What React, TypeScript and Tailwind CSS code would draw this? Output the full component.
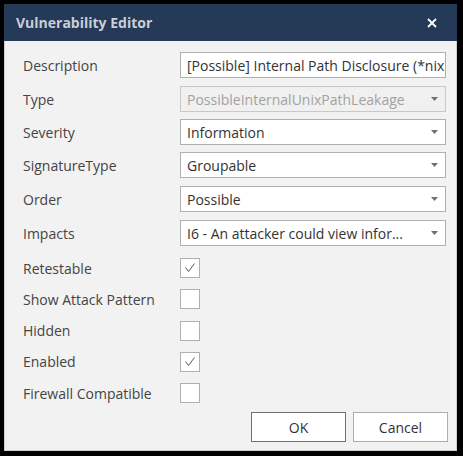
import React from "react";

const font = { fontFamily: '"Open Sans", "Noto Sans", sans-serif' };

const Arrow = () => (
  <svg width="7" height="4" viewBox="0 0 7 4" className="shrink-0">
    <path d="M0 0H7L3.5 4Z" fill="#707070" />
  </svg>
);

const Check = () => (
  <svg width="18" height="18" viewBox="0 0 18 18">
    <path d="M4.5 8.5L7.5 12.5L13.5 4.5" stroke="#555" strokeWidth="1" fill="none" />
  </svg>
);

const Select = ({ value, disabled }: { value: string; disabled?: boolean }) => (
  <div
    className={`flex h-[26px] w-[266px] items-center justify-between border pl-[6px] pr-[7px] ${
      disabled ? "border-[#c8c8c8] bg-[#f0f0f0] text-[#a2a2a2]" : "border-[#b0b0b0] bg-white text-[#333]"
    }`}
  >
    <span className="truncate">{value}</span>
    <Arrow />
  </div>
);

const rows: { label: string; value: string; disabled?: boolean; gap: string }[] = [
  { label: "Type", value: "PossibleInternalUnixPathLeakage", disabled: true, gap: "mt-[8px]" },
  { label: "Severity", value: "Information", gap: "mt-[7px]" },
  { label: "SignatureType", value: "Groupable", gap: "mt-[7px]" },
  { label: "Order", value: "Possible", gap: "mt-[8px]" },
  { label: "Impacts", value: "I6 - An attacker could view infor...", gap: "mt-[8px]" },
];

const checks = [
  { label: "Retestable", checked: true },
  { label: "Show Attack Pattern", checked: false },
  { label: "Hidden", checked: false },
  { label: "Enabled", checked: true },
  { label: "Firewall Compatible", checked: false },
];

export default function App() {
  return (
    <div className="h-[456px] w-[463px] bg-black pb-[5px] pl-[4px] pr-[6px] pt-[4px]" style={font}>
      <div className="flex h-full flex-col">
        <div className="flex h-[37px] shrink-0 items-center justify-between bg-[#243a57] pl-[12px] pr-[20px]">
          <span className="text-[14px] font-bold text-[#c9cfd8]">Vulnerability Editor</span>
          <svg width="10" height="10" viewBox="0 0 10 10">
            <path d="M1 1L9 9M9 1L1 9" stroke="white" strokeWidth="1.8" />
          </svg>
        </div>
        <div className="flex flex-1 flex-col border border-t-0 border-[#d0d0d0] bg-[#f2f2f2] pl-[18px] pr-[10px] pt-[11px] text-[14px] text-[#444]">
          <div className="flex items-center">
            <span className="w-[157px]">Description</span>
            <div className="flex h-[26px] w-[266px] items-center overflow-hidden whitespace-nowrap border border-[#b0b0b0] bg-white pl-[6px] text-[#333]">
              [Possible] Internal Path Disclosure (*nix)
            </div>
          </div>
          {rows.map((r) => (
            <div key={r.label} className={`flex items-center ${r.gap}`}>
              <span className="w-[157px]">{r.label}</span>
              <Select value={r.value} disabled={r.disabled} />
            </div>
          ))}
          <div className="mt-[12px] flex flex-col gap-[11.25px]">
            {checks.map((c) => (
              <div key={c.label} className="flex h-[20px] items-center">
                <span className="w-[157px]">{c.label}</span>
                <div className="flex h-[20px] w-[20px] items-center justify-center border border-[#b0b0b0] bg-white">
                  {c.checked && <Check />}
                </div>
              </div>
            ))}
          </div>
          <div className="-mr-[2px] mt-[9px] flex justify-end gap-[7px]">
            <button className="h-[30px] w-[95px] border border-[#707070] bg-white text-[14px] text-[#333]">OK</button>
            <button className="h-[30px] w-[95px] border border-[#adadad] bg-white text-[14px] text-[#333]">Cancel</button>
          </div>
        </div>
      </div>
    </div>
  );
}
